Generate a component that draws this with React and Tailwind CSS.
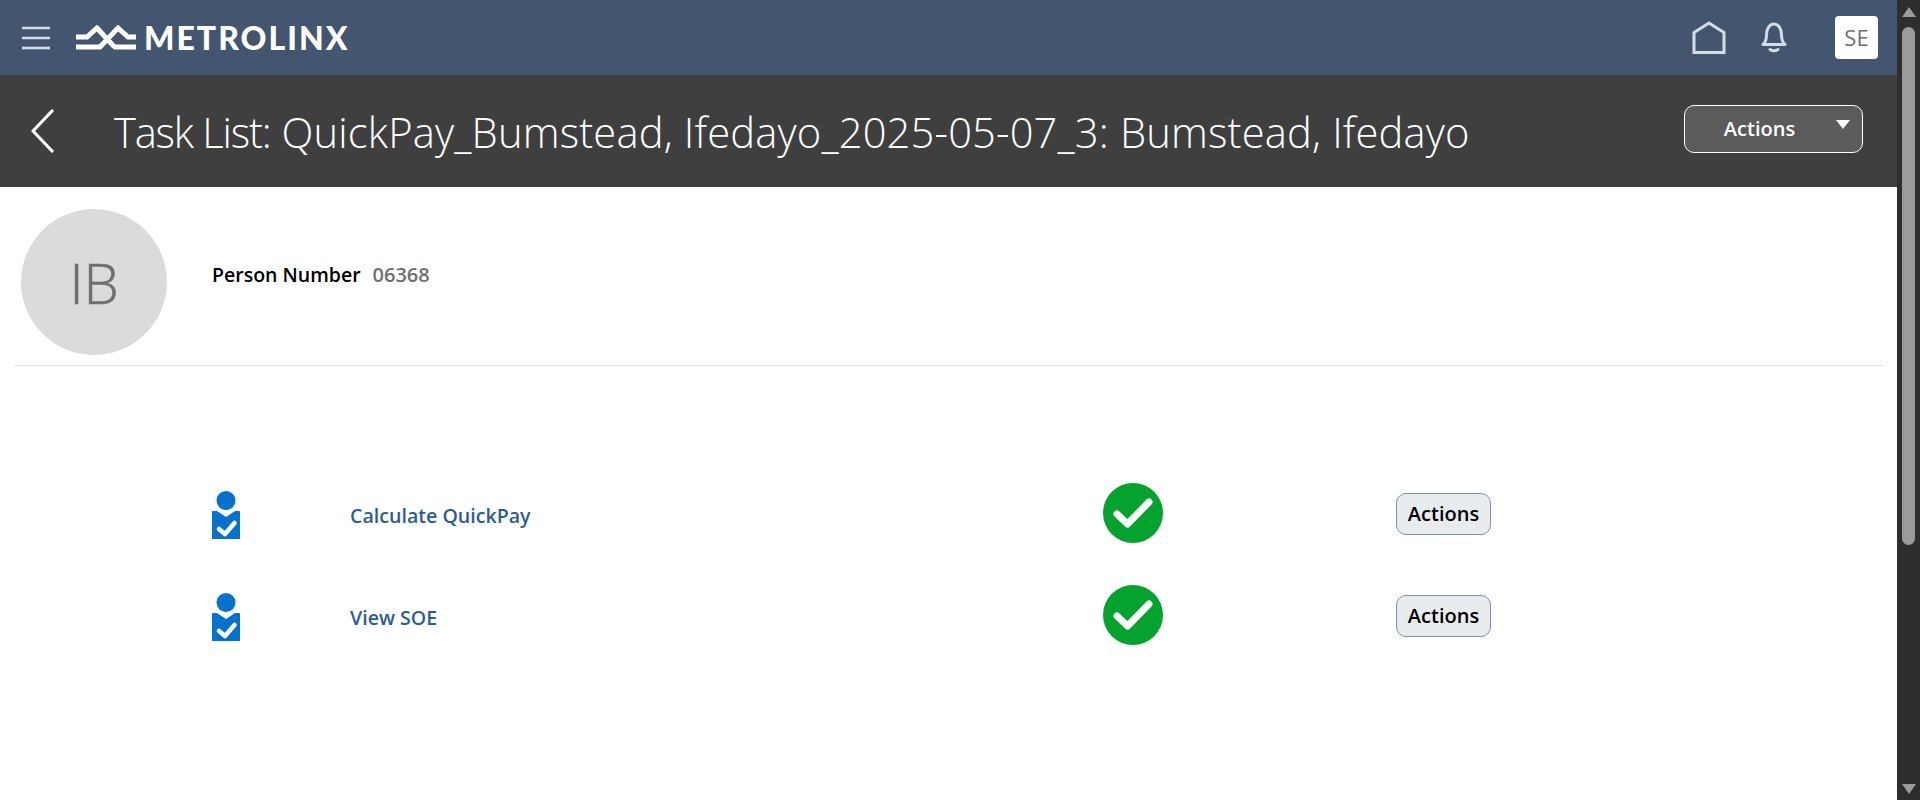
const tasks = ["Calculate QuickPay", "View SOE"];

function Hamburger() {
  return (
    <svg width="28" height="24" viewBox="0 0 28 24" stroke="#d3dde9" strokeWidth="2.5" className="shrink-0">
      <path d="M0 2H28M0 12H28M0 22H28" />
    </svg>
  );
}

// wave mark next to the wordmark
function LogoMark() {
  return (
    <svg width="60" height="26" viewBox="0 0 60 26" fill="none" stroke="white" strokeWidth="5" className="shrink-0">
      <path d="M0 12H11L21 3L37 20.5L39 22H60" />
      <path d="M0 22H24L42 3L52 12H60" />
    </svg>
  );
}

function HomeIcon() {
  return (
    <svg width="34" height="33" viewBox="0 0 34 33" fill="none" stroke="#d3dde9" strokeWidth="3">
      <path d="M2 31.5V11.5L17 2L32 11.5V31.5Z" />
    </svg>
  );
}

function BellIcon() {
  return (
    <svg width="26" height="31" viewBox="0 0 26 31" fill="none" stroke="#d3dde9" strokeWidth="3" strokeLinecap="round" strokeLinejoin="round">
      <path d="M2 22.5C5 20 5.5 17 5.5 13C5.5 6 9 2 13 2C17 2 20.5 6 20.5 13C20.5 17 21 20 24 22.5Z" />
      <path d="M9 27.5Q13 30 17 27.5" />
    </svg>
  );
}

function BackIcon() {
  return (
    <svg width="24" height="44" viewBox="0 0 24 44" fill="none" stroke="white" strokeWidth="3.2" strokeLinecap="round" strokeLinejoin="round" className="shrink-0">
      <path d="M21 2L2 22L21 42" />
    </svg>
  );
}

function PersonCheck() {
  return (
    <svg width="28" height="48" viewBox="0 0 28 48" className="-mt-[3px]">
      <circle cx="14" cy="9.5" r="9.5" fill="#0572ce" />
      <path d="M1 20H5L14 26L23 20H27A1 1 0 0 1 28 21V48H0V21A1 1 0 0 1 1 20Z" fill="#0572ce" />
      <path d="M7 38L13 43L22.5 32" fill="none" stroke="white" strokeWidth="4.5" strokeLinecap="round" strokeLinejoin="round" />
    </svg>
  );
}

function GreenCheck() {
  return (
    <svg width="60" height="60" viewBox="0 0 60 60" className="-mt-[6px]">
      <circle cx="30" cy="30" r="30" fill="#04a32d" />
      <path d="M14 31L24.5 41L46 19" fill="none" stroke="white" strokeWidth="7" strokeLinecap="round" strokeLinejoin="round" />
    </svg>
  );
}

function TaskRow({ name }) {
  return (
    <div className="flex items-center h-[102px] pl-[212px]">
      <div className="w-[138px] shrink-0 flex">
        <PersonCheck />
      </div>
      <a className="w-[753px] shrink-0 text-[19.6px] font-semibold text-[#2b5d94]">{name}</a>
      <div className="w-[293px] shrink-0 flex">
        <GreenCheck />
      </div>
      <button className="w-[95px] h-[42px] -mt-[4px] rounded-[10px] border border-[#7d93ab] bg-[#e9ecef] text-[20px] font-semibold text-black">
        Actions
      </button>
    </div>
  );
}

export default function App() {
  return (
    <div className="flex h-[800px] overflow-hidden bg-white font-['Open_Sans',sans-serif]">
      <div className="flex-1 min-w-0">
        {/* top bar */}
        <header className="h-[75px] bg-[#44566f] flex items-center pl-[22px] pr-[19px]">
          <Hamburger />
          <div className="ml-[26px] flex items-center gap-[8px]">
            <LogoMark />
            <span className="text-[32px] font-black tracking-[2px] leading-none text-white font-['Lato',sans-serif]">METROLINX</span>
          </div>
          <div className="ml-auto flex items-center">
            <HomeIcon />
            <div className="ml-[35px]">
              <BellIcon />
            </div>
            <div className="ml-[48px] w-[43px] h-[43px] rounded-[4px] bg-white flex items-center justify-center text-[22px] text-[#6f6f6f]">
              SE
            </div>
          </div>
        </header>

        {/* title bar */}
        <div className="h-[112px] bg-[#3f3f3f] flex items-center pl-[31px] pr-[34px]">
          <BackIcon />
          <h1 className="ml-[59px] mt-[2px] text-[41.7px] font-light tracking-[0.17px] text-white whitespace-nowrap">
            <span className="tracking-[-1.2px]">Task List:</span> QuickPay_Bumstead, Ifedayo_2025-05-07_3: Bumstead, Ifedayo
          </h1>
          <button className="ml-auto -mt-[4px] relative w-[179px] h-[48px] rounded-[10px] border border-white bg-[#5b5b5b] text-[20px] font-semibold text-white pr-[28px]">
            Actions
            <span className="absolute right-[12px] top-[14px] w-0 h-0 border-l-[7px] border-r-[7px] border-t-[9px] border-l-transparent border-r-transparent border-t-white" />
          </button>
        </div>

        {/* person header */}
        <div className="mx-[15px] h-[179px] border-b border-[#d9e0ea] flex items-start pt-[22px] pl-[6px]">
          <div className="w-[146px] h-[146px] rounded-full bg-[#dbdbdb] flex items-center justify-center text-[56px] font-light text-[#6f6f6f] [-webkit-text-stroke:0.6px_#6f6f6f]">
            IB
          </div>
          <div className="ml-[45px] mt-[51px] flex items-center gap-[12px] text-[19.5px] font-semibold">
            <span className="text-black">Person Number</span>
            <span className="text-[20px] text-[#6f6f6f]">06368</span>
          </div>
        </div>

        {/* tasks */}
        <div className="pt-[99px]">
          {tasks.map((t) => (
            <TaskRow key={t} name={t} />
          ))}
        </div>
      </div>

      {/* scrollbar */}
      <div className="w-[23px] shrink-0 bg-[#2e2e2e] flex flex-col items-center">
        <div className="mt-[7px] w-0 h-0 border-l-[7px] border-r-[7px] border-b-[10px] border-l-transparent border-r-transparent border-b-[#9b9b9b]" />
        <div className="mt-[10px] w-[13px] h-[518px] rounded-full bg-[#9b9b9b]" />
        <div className="mt-auto mb-[6px] w-0 h-0 border-l-[7px] border-r-[7px] border-t-[10px] border-l-transparent border-r-transparent border-t-[#9b9b9b]" />
      </div>
    </div>
  );
}
